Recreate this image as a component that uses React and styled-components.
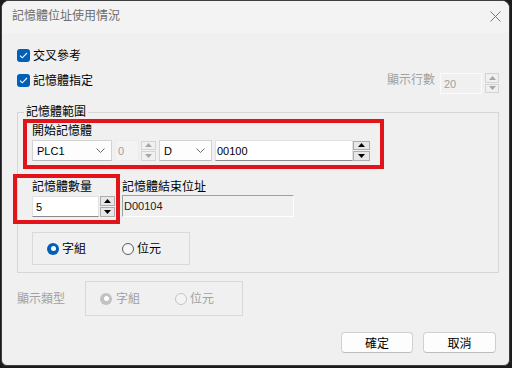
import React from "react";
import styled, { createGlobalStyle } from "styled-components";

const GlobalStyle = createGlobalStyle`
  html, body {
    margin: 0;
    padding: 0;
    background: #1c1c1c;
  }
  body {
    font-family: "Liberation Sans", "Noto Sans CJK TC", sans-serif;
    font-size: 12px;
    color: #000;
  }
  * {
    box-sizing: border-box;
  }
`;

const Window = styled.div`
  width: 509px;
  height: 366px;
  margin-left: 1px;
  background: #f0f0f0;
  border: 1px solid #3e3e3e;
  border-radius: 8px 8px 6px 6px;
  overflow: hidden;
  display: flex;
  flex-direction: column;
`;

const TitleBar = styled.div`
  height: 32px;
  flex: none;
  background: #f3f3f3;
  display: flex;
  align-items: center;
  justify-content: space-between;
  padding: 0 8px 2px 10px;
`;

const Title = styled.span`
  color: #6e6e6e;
  font-size: 12px;
  line-height: 16px;
`;

const Content = styled.div`
  display: flex;
  flex-direction: column;
  padding: 12px 10px 0 15px;
`;

const CheckRow = styled.div`
  display: flex;
  align-items: center;
  justify-content: space-between;
  height: 21px;
  margin-top: ${(p) => p.$mt || 0}px;
`;

const CheckLabel = styled.label`
  display: flex;
  align-items: center;
  gap: 3px;
  line-height: 16px;
`;

const CheckBox = styled.span`
  width: 13px;
  height: 13px;
  border-radius: 3px;
  background: #005fb8;
  display: flex;
  align-items: center;
  justify-content: center;
`;

const RowsField = styled.div`
  display: flex;
  align-items: flex-start;
  align-self: flex-start;
`;

const GrayText = styled.span`
  color: #a0a0a0;
  line-height: 16px;
  margin-top: ${(p) => p.$mt || 0}px;
  margin-right: ${(p) => p.$mr || 0}px;
`;

const FlatField = styled.div`
  width: ${(p) => p.$w}px;
  height: 21px;
  margin-top: ${(p) => p.$mt || 0}px;
  border: 1px solid #fbfbfb;
  background: #f0f0f0;
  color: #a0a0a0;
  font-size: 11px;
  display: flex;
  align-items: center;
  padding-left: 3px;
`;

const SpinBox = styled.div`
  display: flex;
  flex-direction: column;
  gap: 1px;
  width: ${(p) => p.$w || 15}px;
  height: ${(p) => p.$h || 20}px;
  margin-top: ${(p) => p.$mt || 0}px;
  margin-left: ${(p) => p.$ml || 0}px;
  align-self: ${(p) => p.$align || "auto"};
`;

const SpinButton = styled.div`
  flex: 1;
  display: flex;
  align-items: center;
  justify-content: center;
  border: 1px solid ${(p) => (p.$disabled ? "#d4d4d4" : "#adadad")};
  background: ${(p) => (p.$disabled ? "#f0f0f0" : "#e7e7e7")};
  color: ${(p) => (p.$disabled ? "#a6a6a6" : "#000")};
`;

const GroupBox = styled.fieldset`
  margin: 14px 0 0 0;
  padding: 0 0 7px 0;
  border: 1px solid #d6d6d6;
  min-width: 0;
  display: flex;
  flex-direction: column;
`;

const Legend = styled.legend`
  margin-left: 6px;
  padding: 0 2px;
  line-height: 14px;
`;

const Highlight = styled.div`
  border: 4px solid #e3131b;
  width: ${(p) => p.$w}px;
  margin-left: ${(p) => p.$ml}px;
  margin-top: ${(p) => p.$mt || 0}px;
  padding: ${(p) => p.$pad};
  display: flex;
  flex-direction: column;
`;

const FieldLabel = styled.div`
  line-height: 16px;
`;

const ControlRow = styled.div`
  display: flex;
  height: 21px;
  margin-top: 1px;
`;

const Combo = styled.div`
  width: ${(p) => p.$w}px;
  margin-left: ${(p) => p.$ml || 0}px;
  height: 21px;
  background: #fdfdfd;
  border: 1px solid #d2d2d2;
  border-bottom-color: #b8b8b8;
  display: flex;
  align-items: center;
  justify-content: space-between;
  padding: 0 6px 0 4px;
  font-size: 11px;
`;

const TextInput = styled.div`
  width: ${(p) => p.$w}px;
  margin-left: ${(p) => p.$ml || 0}px;
  height: 21px;
  background: #fff;
  border: 1px solid #e2e2e2;
  border-bottom-color: #8a8a8a;
  display: flex;
  align-items: center;
  padding-left: ${(p) => p.$pl || 1}px;
  font-size: 11px;
`;

const DisabledField = styled.div`
  width: 24px;
  margin-left: 3px;
  height: 21px;
  background: #f3f3f3;
  border: 1px solid #ececec;
  color: #a0a0a0;
  display: flex;
  align-items: center;
  padding-left: 2px;
  font-size: 11px;
`;

const CountRow = styled.div`
  display: flex;
  margin-top: 5px;
`;

const EndColumn = styled.div`
  display: flex;
  flex-direction: column;
  margin-left: 2px;
  padding-top: 5px;
`;

const SunkenField = styled.div`
  width: 172px;
  height: 22px;
  border: 1px solid #ffffff;
  border-top-color: #a0a0a0;
  border-left-color: #a0a0a0;
  display: flex;
  align-items: center;
  padding-left: 1px;
  font-size: 11px;
  color: #222;
`;

const RadioBox = styled.div`
  width: 158px;
  height: ${(p) => p.$h}px;
  margin: ${(p) => p.$m};
  border: 1px solid #d9d9d9;
  display: flex;
  align-items: center;
  padding-left: 14px;
  gap: ${(p) => p.$gap}px;
  color: ${(p) => (p.$disabled ? "#a0a0a0" : "#000")};
`;

const RadioOption = styled.label`
  display: flex;
  align-items: center;
  gap: ${(p) => p.$gap || 3}px;
  line-height: 16px;
`;

const RadioCircle = styled.span`
  width: 12px;
  height: 12px;
  border-radius: 50%;
  display: flex;
  align-items: center;
  justify-content: center;
  background: ${(p) =>
    p.$checked ? (p.$disabled ? "#c2c2c2" : "#005fb8") : p.$disabled ? "#f4f4f4" : "#f7f7f7"};
  border: ${(p) =>
    p.$checked ? "none" : p.$disabled ? "1px solid #c4c4c4" : "1px solid #5c5c5c"};
  &::after {
    content: "";
    display: ${(p) => (p.$checked ? "block" : "none")};
    width: 5px;
    height: 5px;
    border-radius: 50%;
    background: #fff;
  }
`;

const TypeRow = styled.div`
  display: flex;
  align-items: center;
  margin-top: 8px;
`;

const ButtonRow = styled.div`
  display: flex;
  justify-content: flex-end;
  gap: 10px;
  margin: 16px 3px 0 0;
`;

const Button = styled.button`
  width: ${(p) => p.$w}px;
  height: 21px;
  background: #fdfdfd;
  border: 1px solid #d0d0d0;
  border-bottom-color: #bdbdbd;
  border-radius: 4px;
  font-family: inherit;
  font-size: 12px;
  color: #000;
  padding: 0;
`;

function Check() {
  return (
    <CheckBox>
      <svg width="9" height="7" viewBox="0 0 9 7">
        <polyline points="1,3.6 3.3,5.8 8,1" fill="none" stroke="#fff" strokeWidth="1.1" />
      </svg>
    </CheckBox>
  );
}

function Arrow({ up }) {
  return (
    <svg width="7" height="4" viewBox="0 0 7 4">
      <polygon points={up ? "0,4 7,4 3.5,0" : "0,0 7,0 3.5,4"} fill="currentColor" />
    </svg>
  );
}

function Spinner({ disabled, ...rest }) {
  return (
    <SpinBox {...rest}>
      <SpinButton $disabled={disabled}>
        <Arrow up />
      </SpinButton>
      <SpinButton $disabled={disabled}>
        <Arrow />
      </SpinButton>
    </SpinBox>
  );
}

function Chevron() {
  return (
    <svg width="9" height="5" viewBox="0 0 9 5">
      <polyline points="0.5,0.5 4.5,4.5 8.5,0.5" fill="none" stroke="#6a6a6a" strokeWidth="1" />
    </svg>
  );
}

function Radio({ checked, disabled, label, gap }) {
  return (
    <RadioOption $gap={gap}>
      <RadioCircle $checked={checked} $disabled={disabled} />
      {label}
    </RadioOption>
  );
}

export default function App() {
  return (
    <>
      <GlobalStyle />
      <Window>
        <TitleBar>
          <Title>記憶體位址使用情況</Title>
          <svg width="11" height="11" viewBox="0 0 11 11">
            <path d="M0.5 0.5 L10.5 10.5 M10.5 0.5 L0.5 10.5" stroke="#777" strokeWidth="1" />
          </svg>
        </TitleBar>

        <Content>
          <CheckRow>
            <CheckLabel>
              <Check />
              交叉參考
            </CheckLabel>
          </CheckRow>
          <CheckRow $mt={4}>
            <CheckLabel>
              <Check />
              記憶體指定
            </CheckLabel>
            <RowsField>
              <GrayText $mt={2} $mr={5}>
                顯示行數
              </GrayText>
              <FlatField $w={42} $mt={3}>
                20
              </FlatField>
              <Spinner disabled $ml={3} $mt={3} $h={20} $w={14} />
            </RowsField>
          </CheckRow>

          <GroupBox>
            <Legend>記憶體範圍</Legend>
            <Highlight $w={361} $ml={5} $pad="0 0 4px 5px">
              <FieldLabel>開始記憶體</FieldLabel>
              <ControlRow>
                <Combo $w={80}>
                  PLC1
                  <Chevron />
                </Combo>
                <DisabledField>0</DisabledField>
                <Spinner disabled $ml={2} $w={15} $h={20} $align="center" />
                <Combo $w={53} $ml={3}>
                  D
                  <Chevron />
                </Combo>
                <TextInput $w={138} $ml={3}>
                  00100
                </TextInput>
                <Spinner $w={17} $h={20} $align="center" />
              </ControlRow>
            </Highlight>

            <CountRow>
              <Highlight $w={107} $ml={-5} $pad="1px 0 3px 15px">
                <FieldLabel>記憶體數量</FieldLabel>
                <ControlRow>
                  <TextInput $w={67} $pl={3}>
                    5
                  </TextInput>
                  <Spinner $ml={1} $w={15} $h={21} />
                </ControlRow>
              </Highlight>
              <EndColumn>
                <FieldLabel>記憶體結束位址</FieldLabel>
                <SunkenField>D00104</SunkenField>
              </EndColumn>
            </CountRow>

            <RadioBox $h={33} $m="8px 0 0 14px" $gap={36}>
              <Radio checked label="字組" />
              <Radio label="位元" />
            </RadioBox>
          </GroupBox>

          <TypeRow>
            <GrayText $mr={20}>顯示類型</GrayText>
            <RadioBox $h={35} $m="0" $gap={35} $disabled>
              <Radio checked disabled label="字組" gap={4} />
              <Radio disabled label="位元" />
            </RadioBox>
          </TypeRow>

          <ButtonRow>
            <Button $w={72}>確定</Button>
            <Button $w={73}>取消</Button>
          </ButtonRow>
        </Content>
      </Window>
    </>
  );
}
